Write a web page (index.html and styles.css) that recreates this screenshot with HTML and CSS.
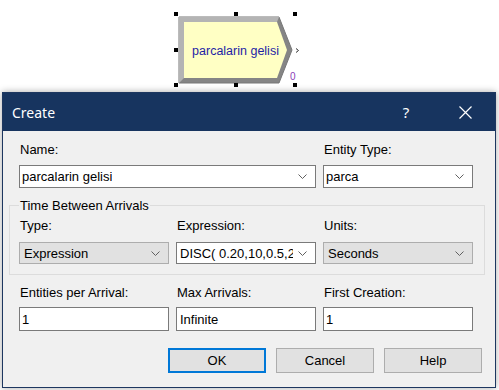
FILE: index.html
```html
<!DOCTYPE html>
<html lang="en">
<head>
  <meta charset="UTF-8" />
  <title>Create</title>
  <link rel="stylesheet" href="styles.css">
</head>
<body>
  <div class="canvas">
    <svg class="diagram" width="499" height="92" viewBox="0 0 499 92">
      <polygon points="179,17 279,17 292,50 279,83 179,83" fill="#858585" stroke="#777" stroke-width="1" />
      <polygon points="179,17 279,17 277,22 184,22 184,78 179,83" fill="#b4b4b4" />
      <polygon points="184,22 277,22 287,50 277,78 184,78" fill="#ffffc4" />
      <text x="235.5" y="54.5" class="node-label" text-anchor="middle">parcalarin gelisi</text>
      <polyline points="296,48.5 298.5,50.5 296,52.5" fill="none" stroke="#333" stroke-width="1" />
      <text x="290" y="80" class="node-count">0</text>
      <rect x="174" y="12" width="4" height="4" />
      <rect x="234" y="12" width="4" height="4" />
      <rect x="293" y="12" width="4" height="4" />
      <rect x="174" y="48" width="4" height="4" />
      <rect x="174" y="83" width="4" height="4" />
      <rect x="234" y="83" width="4" height="4" />
      <rect x="293" y="83" width="4" height="4" />
    </svg>
  </div>

  <div class="dialog">
    <div class="titlebar">
      <span class="title">Create</span>
      <span class="title-btn help">?</span>
      <span class="title-btn close">
        <svg width="13" height="13" viewBox="0 0 13 13"><path d="M0.5 0.5 L12.5 12.5 M12.5 0.5 L0.5 12.5" stroke="#fff" stroke-width="1.2" fill="none" /></svg>
      </span>
    </div>

    <div class="content">
      <div class="row">
        <label class="wide">Name:</label>
        <label>Entity Type:</label>
        <div class="combo wide">
          <span class="value">parcalarin gelisi</span>
          <svg class="chev" width="9" height="5" viewBox="0 0 9 5"><polyline points="0.5,0.5 4.5,4.5 8.5,0.5" /></svg>
        </div>
        <div class="combo">
          <span class="value">parca</span>
          <svg class="chev" width="9" height="5" viewBox="0 0 9 5"><polyline points="0.5,0.5 4.5,4.5 8.5,0.5" /></svg>
        </div>
      </div>

      <fieldset class="group">
        <legend>Time Between Arrivals</legend>
        <div class="row">
          <label>Type:</label>
          <label>Expression:</label>
          <label>Units:</label>
          <div class="combo list">
            <span class="value">Expression</span>
            <svg class="chev" width="9" height="5" viewBox="0 0 9 5"><polyline points="0.5,0.5 4.5,4.5 8.5,0.5" /></svg>
          </div>
          <div class="combo expr">
            <span class="value">DISC( 0.20,10,0.5,20</span>
            <svg class="chev" width="9" height="5" viewBox="0 0 9 5"><polyline points="0.5,0.5 4.5,4.5 8.5,0.5" /></svg>
          </div>
          <div class="combo list">
            <span class="value">Seconds</span>
            <svg class="chev" width="9" height="5" viewBox="0 0 9 5"><polyline points="0.5,0.5 4.5,4.5 8.5,0.5" /></svg>
          </div>
        </div>
      </fieldset>

      <div class="row bottom-row">
        <label>Entities per Arrival:</label>
        <label>Max Arrivals:</label>
        <label>First Creation:</label>
        <div class="field">1</div>
        <div class="field pad3">Infinite</div>
        <div class="field">1</div>
      </div>

      <div class="buttons">
        <button class="btn default">OK</button>
        <button class="btn">Cancel</button>
        <button class="btn">Help</button>
      </div>
    </div>
  </div>
</body>
</html>
```

FILE: styles.css
```css
*{
  margin: 0;
  padding: 0;
  box-sizing: border-box;
}
body{
  background-color: #ffffff;
  font-family: "Liberation Sans", Arial, sans-serif;
  font-size: 13px;
  color: #000;
  width: 499px;
  height: 390px;
  overflow: hidden;
}

/* diagram area behind the dialog */
.canvas{
  height: 92px;
  position: relative;
}
.diagram{
  display: block;
}
.diagram rect{
  fill: #000;
}
.node-label{
  font-family: "Liberation Sans", Arial, sans-serif;
  font-size: 12.5px;
  fill: #1e1ea6;
}
.node-count{
  font-family: "Liberation Sans", Arial, sans-serif;
  font-size: 10px;
  fill: #8a40b8;
}

/* dialog */
.dialog{
  margin-left: 2px;
  width: 494px;
  border: 1px solid #1d3760;
  background-color: #f0f0f0;
  box-shadow: 0 0 7px rgba(0, 0, 0, 0.35);
}
.titlebar{
  height: 38px;
  background-color: #17345f;
  color: #fff;
  display: flex;
  align-items: center;
  font-family: "Noto Sans", "Open Sans", sans-serif;
}
.title{
  flex: 1;
  padding-left: 9px;
  font-size: 14px;
}
.title-btn{
  width: 46px;
  height: 38px;
  display: flex;
  align-items: center;
  justify-content: center;
}
.help{
  font-size: 15px;
  margin-right: 13px;
}
.close{
  margin-right: 7px;
}
.close svg{
  display: block;
}

.content{
  padding: 11px 10px 14px 6px;
}
.row{
  display: grid;
  grid-template-columns: 150px 140px 150px;
  column-gap: 7px;
  row-gap: 8px;
  padding-left: 10px;
}
.row label{
  display: block;
  line-height: 15px;
  padding-left: 1px;
}
.row .wide{
  grid-column: span 2;
}

.combo{
  position: relative;
  height: 23px;
  background-color: #fff;
  border: 1px solid #7a7a7a;
  display: flex;
  align-items: center;
  padding: 0 22px 0 2px;
  overflow: hidden;
  white-space: nowrap;
}
.combo .value{
  overflow: hidden;
  display: block;
}
.combo .chev{
  position: absolute;
  right: 8px;
  top: 8px;
}
.chev polyline{
  fill: none;
  stroke: #606060;
  stroke-width: 1;
}
.combo.list{
  background-color: #e1e1e1;
  border-color: #adadad;
  padding-left: 4px;
  height: 22px;
}
.combo.expr{
  padding-left: 3px;
  height: 22px;
}

.group{
  margin-top: 10px;
  border: 1px solid #dcdcdc;
  padding: 5px 0 10px 0;
}
.group legend{
  margin-left: 9px;
  padding: 0 1px;
  line-height: 15px;
}
.group .row{
  row-gap: 9px;
  padding-left: 9px;
}

.bottom-row{
  margin-top: 10px;
  row-gap: 7px;
}
.field{
  height: 24px;
  background-color: #fff;
  border: 1px solid #7a7a7a;
  padding-left: 2px;
  display: flex;
  align-items: center;
}
.field.pad3{
  padding-left: 3px;
}

.buttons{
  display: flex;
  justify-content: flex-end;
  gap: 10px;
  margin-top: 17px;
  padding-right: 3px;
}
.btn{
  width: 98px;
  height: 25px;
  background-color: #e1e1e1;
  border: 1px solid #adadad;
  font-family: "Liberation Sans", Arial, sans-serif;
  font-size: 13px;
  color: #000;
}
.btn.default{
  border: 2px solid #0078d7;
}
```
